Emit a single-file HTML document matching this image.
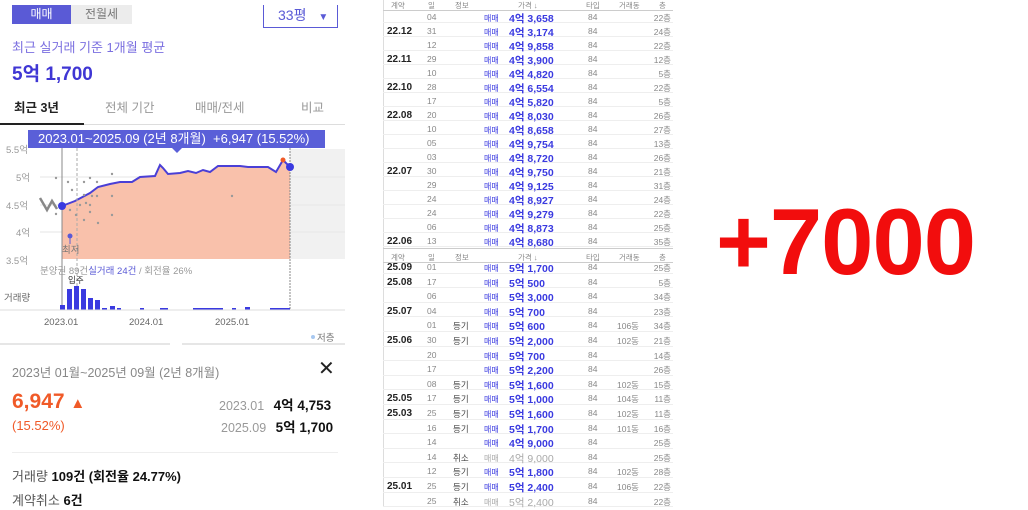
<!DOCTYPE html>
<html><head><meta charset="utf-8">
<style>
*{margin:0;padding:0;box-sizing:border-box}
body{width:1028px;height:507px;overflow:hidden;background:#fff;font-family:"Liberation Sans","Noto Sans CJK KR",sans-serif;position:relative;color:#222}
.a{position:absolute;white-space:nowrap}
.tbl{position:absolute;left:383px;width:290px;font-size:8.5px;color:#888}
.row{position:absolute;left:0;width:290px;height:14px;border-bottom:1px solid #eee}
.row span{position:absolute;top:3px}
.m{color:#3a3ae0;font-size:8px}
.p{color:#3a3ae0;font-weight:bold;font-size:10.5px}
.ym{color:#222;font-weight:bold;font-size:10px;left:4px}
.g{color:#aaa!important}
</style></head><body>

<!-- LEFT PANEL -->
<div class="a" style="left:12px;top:5px;width:59px;height:19px;background:#5a5ad6;color:#fff;font-size:12px;text-align:center;line-height:19px">매매</div>
<div class="a" style="left:71px;top:5px;width:61px;height:19px;background:#ececec;color:#777;font-size:12px;text-align:center;line-height:19px">전월세</div>
<div class="a" style="left:263px;top:5px;width:75px;height:23px;border:1.5px solid #5a5ad6;border-top:none;color:#5a5ad6;font-size:14px;line-height:20px;padding-left:14px">33평 <span style="font-size:10px;margin-left:8px">▼</span></div>
<div class="a" style="left:12px;top:37px;color:#7b6fe0;font-size:13px">최근 실거래 기준 1개월 평균</div>
<div class="a" style="left:12px;top:59px;color:#3f36d4;font-size:19px;font-weight:bold">5억 1,700</div>
<div class="a" style="left:14px;top:97px;font-size:12.5px;color:#222;font-weight:bold">최근 3년</div>
<div class="a" style="left:105px;top:97px;font-size:12.5px;color:#999">전체 기간</div>
<div class="a" style="left:195px;top:97px;font-size:12.5px;color:#999">매매/전세</div>
<div class="a" style="left:301px;top:97px;font-size:12.5px;color:#999">비교</div>
<div class="a" style="left:0;top:124px;width:345px;height:1px;background:#ddd"></div>
<div class="a" style="left:0;top:123px;width:84px;height:2px;background:#222"></div>

<svg class="a" style="left:0;top:125px" width="345" height="220" viewBox="0 125 345 220">
 <rect x="290" y="149" width="55" height="110" fill="#f1f1f1"/>
 <g stroke="#e6e6e6" stroke-width="1"><line x1="40" y1="177" x2="345" y2="177"/><line x1="40" y1="205" x2="345" y2="205"/><line x1="40" y1="232" x2="345" y2="232"/></g>
 <path d="M62 206 L75 201 L90 193 L98 187 L110 184 L120 182 L132 182 L140 177 L155 176 L160 165 L163 168 L168 174 L180 173 L188 171 L196 173 L203 170 L210 172 L218 166 L240 166 L248 167 L268 167 L276 172 L283 160 L290 167 L290 259 L62 259 Z" fill="#f9c1ab"/>
 <path d="M62 206 L75 201 L90 193 L98 187 L110 184 L120 182 L132 182 L140 177 L155 176 L160 165 L163 168 L168 174 L180 173 L188 171 L196 173 L203 170 L210 172 L218 166 L240 166 L248 167 L268 167 L276 172 L283 160 L290 167" fill="none" stroke="#4a3fd6" stroke-width="2"/>
 <path d="M40 198 L47 210 L52 201 L57 209" fill="none" stroke="#888" stroke-width="2.5"/>
 <line x1="62" y1="148" x2="62" y2="310" stroke="#888" stroke-width="1"/>
 <line x1="77" y1="148" x2="77" y2="310" stroke="#aaa" stroke-dasharray="3,2"/>
 <line x1="290" y1="148" x2="290" y2="310" stroke="#888" stroke-dasharray="2,1"/>
 <g fill="#999"><circle cx="56" cy="178" r="1.2"/><circle cx="68" cy="182" r="1.2"/><circle cx="72" cy="190" r="1.2"/><circle cx="84" cy="182" r="1.2"/><circle cx="90" cy="178" r="1.2"/><circle cx="84" cy="195" r="1.2"/><circle cx="92" cy="196" r="1.2"/><circle cx="97" cy="182" r="1.2"/><circle cx="97" cy="196" r="1.2"/><circle cx="112" cy="174" r="1.2"/><circle cx="112" cy="196" r="1.2"/><circle cx="70" cy="210" r="1.2"/><circle cx="76" cy="215" r="1.2"/><circle cx="84" cy="220" r="1.2"/><circle cx="90" cy="212" r="1.2"/><circle cx="112" cy="215" r="1.2"/><circle cx="98" cy="223" r="1.2"/><circle cx="232" cy="196" r="1.2"/><circle cx="56" cy="214" r="1.2"/><circle cx="80" cy="205" r="1.2"/><circle cx="86" cy="203" r="1.2"/><circle cx="90" cy="205" r="1.2"/></g>
 <circle cx="62" cy="206" r="4" fill="#3a3ae0"/>
 <circle cx="290" cy="167" r="4" fill="#3a3ae0"/>
 <circle cx="283" cy="160" r="2.5" fill="#f05a28"/>
 <line x1="70" y1="236" x2="70" y2="244" stroke="#5a5ad6"/><circle cx="70" cy="236" r="2.5" fill="#5a5ad6"/>
 <g fill="#999" font-size="9.5" font-family="Liberation Sans,Noto Sans CJK KR,sans-serif"><text x="6" y="153">5.5억</text><text x="16" y="181">5억</text><text x="6" y="209">4.5억</text><text x="16" y="236">4억</text><text x="6" y="264">3.5억</text><text x="62" y="253" fill="#777">최저</text><text x="40" y="274">분양권 89건<tspan fill="#5a5ad6">실거래 24건</tspan> / 회전율 26%</text><text x="4" y="301" fill="#666">거래량</text><text x="68" y="283" fill="#333" font-size="8.5">입주</text>
 <text x="44" y="325" fill="#666">2023.01</text><text x="129" y="325" fill="#666">2024.01</text><text x="215" y="325" fill="#666">2025.01</text><text x="317" y="341" fill="#777">저층</text></g>
 <circle cx="313" cy="337" r="2" fill="#a8c8f0"/>
 <g fill="#3a3ae0"><rect x="60" y="305" width="5" height="5"/><rect x="67" y="289" width="5" height="21"/><rect x="74" y="286" width="5" height="24"/><rect x="81" y="289" width="5" height="21"/><rect x="88" y="298" width="5" height="12"/><rect x="95" y="300" width="5" height="10"/><rect x="102" y="308" width="5" height="2"/><rect x="110" y="306" width="5" height="4"/><rect x="117" y="308" width="4" height="2"/><rect x="140" y="308" width="4" height="2"/><rect x="160" y="308" width="8" height="2"/><rect x="193" y="308" width="30" height="2"/><rect x="232" y="308" width="4" height="2"/><rect x="245" y="307" width="5" height="3"/><rect x="270" y="308" width="20" height="2"/></g>
 <line x1="0" y1="310" x2="345" y2="310" stroke="#ddd"/>
 <line x1="0" y1="344" x2="170" y2="344" stroke="#e6e6e6" stroke-width="2"/><line x1="182" y1="344" x2="345" y2="344" stroke="#e6e6e6" stroke-width="2"/>
</svg>
<div class="a" style="left:28px;top:130px;width:297px;height:18px;background:#5a5fd8;color:#fff;font-size:13px;line-height:18px;padding-left:10px">2023.01~2025.09 (2년 8개월) &nbsp;+6,947 (15.52%)</div>
<div class="a" style="left:172px;top:148px;width:0;height:0;border-left:5px solid transparent;border-right:5px solid transparent;border-top:5px solid #5a5fd8"></div>

<div class="a" style="left:12px;top:362px;font-size:12.5px;color:#888">2023년 01월~2025년 09월 (2년 8개월)</div>
<div class="a" style="left:318px;top:356px;font-size:20px;color:#222">✕</div>
<div class="a" style="left:12px;top:390px;font-size:21px;font-weight:bold;color:#f05a28">6,947 <span style="font-size:15px">▲</span></div>
<div class="a" style="left:12px;top:418px;font-size:13px;color:#f05a28">(15.52%)</div>
<div class="a" style="left:219px;top:394px;font-size:12.5px;color:#999">2023.01 <b style="color:#111;font-size:13.5px;margin-left:6px">4억 4,753</b></div>
<div class="a" style="left:221px;top:416px;font-size:12.5px;color:#999">2025.09 <b style="color:#111;font-size:13.5px;margin-left:6px">5억 1,700</b></div>
<div class="a" style="left:12px;top:452px;width:326px;height:1px;background:#eee"></div>
<div class="a" style="left:12px;top:466px;font-size:13px;color:#555">거래량 <b style="color:#111">109건 (회전율 24.77%)</b></div>
<div class="a" style="left:12px;top:490px;font-size:13px;color:#555">계약취소 <b style="color:#111">6건</b></div>

<!-- TABLES -->
<div class="a" style="left:383px;top:0;width:1px;height:507px;background:#ddd"></div>
<div class="tbl" style="top:0;height:250px">
 <span class="a" style="left:8px;top:0;font-size:7.5px">계약</span><span class="a" style="left:45px;top:0;font-size:7.5px">일</span><span class="a" style="left:72px;top:0;font-size:7.5px">정보</span><span class="a" style="left:135px;top:0;font-size:7.5px">가격 ↓</span><span class="a" style="left:203px;top:0;font-size:7.5px">타입</span><span class="a" style="left:236px;top:0;font-size:7.5px">거래동</span><span class="a" style="left:276px;top:0;font-size:7.5px">층</span>
 <div class="a" style="left:0;top:10px;width:290px;height:1px;background:#ccc"></div>
</div>
<div class="tbl" style="top:248px;height:259px">
 <div class="a" style="left:0;top:0;width:290px;height:1px;background:#ccc"></div>
 <span class="a" style="left:8px;top:4px;font-size:7.5px">계약</span><span class="a" style="left:45px;top:4px;font-size:7.5px">일</span><span class="a" style="left:72px;top:4px;font-size:7.5px">정보</span><span class="a" style="left:135px;top:4px;font-size:7.5px">가격 ↓</span><span class="a" style="left:203px;top:4px;font-size:7.5px">타입</span><span class="a" style="left:236px;top:4px;font-size:7.5px">거래동</span><span class="a" style="left:276px;top:4px;font-size:7.5px">층</span>
 <div class="a" style="left:0;top:14px;width:290px;height:1px;background:#ccc"></div>
</div>
<div id="rows"></div>
<script>
var up=[["","04","","4억 3,658","","22층"],["22.12","31","","4억 3,174","","24층"],["","12","","4억 9,858","","22층"],["22.11","29","","4억 3,900","","12층"],["","10","","4억 4,820","","5층"],["22.10","28","","4억 6,554","","22층"],["","17","","4억 5,820","","5층"],["22.08","20","","4억 8,030","","26층"],["","10","","4억 8,658","","27층"],["","05","","4억 9,754","","13층"],["","03","","4억 8,720","","26층"],["22.07","30","","4억 9,750","","21층"],["","29","","4억 9,125","","31층"],["","24","","4억 8,927","","24층"],["","24","","4억 9,279","","22층"],["","06","","4억 8,873","","25층"],["22.06","13","","4억 8,680","","35층"]];
var lo=[["25.09","01","","5억 1,700","","25층"],["25.08","17","","5억 500","","5층"],["","06","","5억 3,000","","34층"],["25.07","04","","5억 700","","23층"],["","01","등기","5억 600","106동","34층"],["25.06","30","등기","5억 2,000","102동","21층"],["","20","","5억 700","","14층"],["","17","","5억 2,200","","26층"],["","08","등기","5억 1,600","102동","15층"],["25.05","17","등기","5억 1,000","104동","11층"],["25.03","25","등기","5억 1,600","102동","11층"],["","16","등기","5억 1,700","101동","16층"],["","14","","4억 9,000","","25층"],["","14","취소","4억 9,000","","25층"],["","12","등기","5억 1,800","102동","28층"],["25.01","25","등기","5억 2,400","106동","22층"],["","25","취소","5억 2,400","","22층"]];
var h="";
function mk(arr,top,rh){arr.forEach(function(r,i){var c=r[2]=="취소";h+='<div class="row" style="left:383px;top:'+(top+i*rh)+'px;height:'+rh+'px;font-size:8.5px;color:#888">'+
'<span class="ym">'+r[0]+'</span><span style="left:44px">'+r[1]+'</span><span style="left:70px;color:#444">'+r[2]+'</span>'+
'<span class="m'+(c?' g':'')+'" style="left:101px;top:4px">매매</span><span class="p'+(c?' g':'')+'" style="left:126px;top:2px'+(c?';font-weight:normal':'')+'">'+r[3]+'</span>'+
'<span style="left:205px">84</span><span style="left:234px">'+r[4]+'</span><span style="right:2px">'+r[5]+'</span></div>';});}
mk(up,9,14);mk(lo,259,14.6);
document.getElementById("rows").innerHTML=h;
</script>

<div class="a" style="left:716px;top:188px;font-size:94px;font-weight:bold;color:#f20d0d;letter-spacing:-1px">+7000</div>
</body></html>
